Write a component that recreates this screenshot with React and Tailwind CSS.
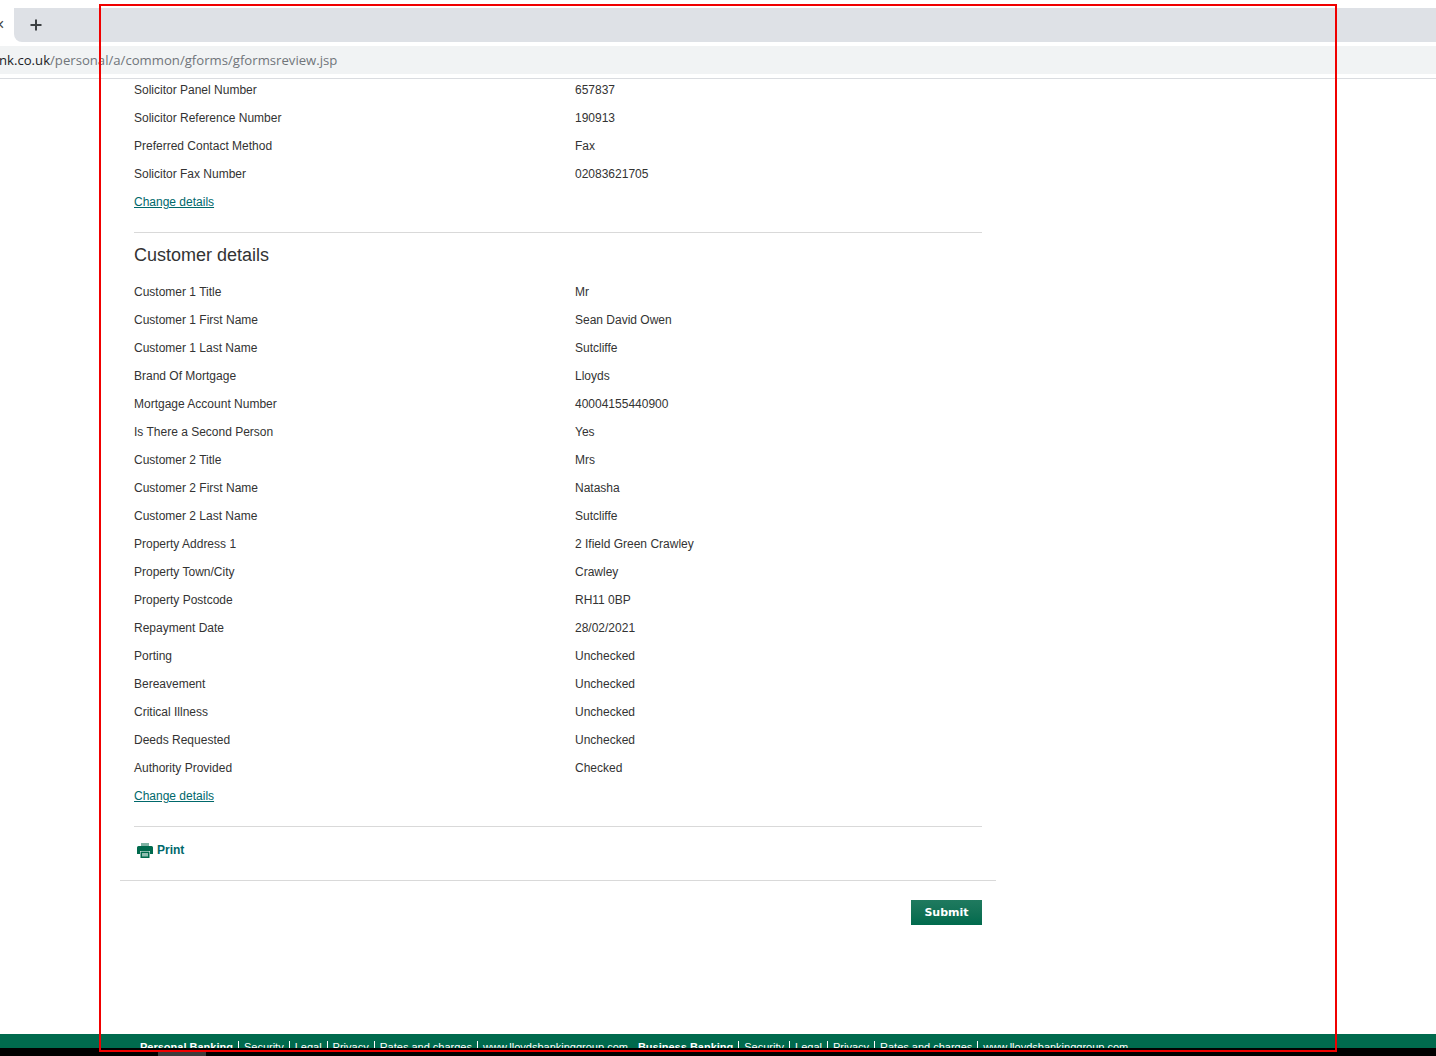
const solicitorRows = [
  ['Solicitor Panel Number', '657837'],
  ['Solicitor Reference Number', '190913'],
  ['Preferred Contact Method', 'Fax'],
  ['Solicitor Fax Number', '02083621705'],
];

const customerRows = [
  ['Customer 1 Title', 'Mr'],
  ['Customer 1 First Name', 'Sean David Owen'],
  ['Customer 1 Last Name', 'Sutcliffe'],
  ['Brand Of Mortgage', 'Lloyds'],
  ['Mortgage Account Number', '40004155440900'],
  ['Is There a Second Person', 'Yes'],
  ['Customer 2 Title', 'Mrs'],
  ['Customer 2 First Name', 'Natasha'],
  ['Customer 2 Last Name', 'Sutcliffe'],
  ['Property Address 1', '2 Ifield Green Crawley'],
  ['Property Town/City', 'Crawley'],
  ['Property Postcode', 'RH11 0BP'],
  ['Repayment Date', '28/02/2021'],
  ['Porting', 'Unchecked'],
  ['Bereavement', 'Unchecked'],
  ['Critical Illness', 'Unchecked'],
  ['Deeds Requested', 'Unchecked'],
  ['Authority Provided', 'Checked'],
];

const footerLinks = ['Security', 'Legal', 'Privacy', 'Rates and charges', 'www.lloydsbankinggroup.com'];

function Row({ label, value }) {
  return (
    <div className="flex h-7 items-center">
      <div className="w-[441px]">{label}</div>
      <div>{value}</div>
    </div>
  );
}

function ChangeLink() {
  return (
    <div className="flex h-7 items-center">
      <a href="#" className="text-[#00686b] underline">Change details</a>
    </div>
  );
}

function FooterGroup({ title }) {
  return (
    <>
      <span className="font-bold">{title}</span>
      {footerLinks.map((link) => (
        <span key={link} className="ml-[5px] border-l border-white pl-[5px]">{link}</span>
      ))}
    </>
  );
}

export default function App() {
  return (
    <div className="relative flex h-[1056px] flex-col overflow-hidden bg-white font-['Liberation_Sans',Arial,sans-serif] text-[12px] text-[#333]">
      {/* browser chrome */}
      <div className="mt-2 flex h-[34px] bg-white">
        <div className="flex w-[14px] items-center text-[16px] text-[#444]">
          <span className="-ml-[5px]">×</span>
        </div>
        <div className="flex flex-1 items-center rounded-bl-lg bg-[#dee1e6] pl-[14px]">
          <svg width="16" height="16" viewBox="0 0 16 16" fill="none" stroke="#3c4043" strokeWidth="2">
            <path d="M8 2.500v11M2.500 8h11" />
          </svg>
        </div>
      </div>
      <div className="mt-1 flex h-7 items-center bg-[#f1f3f4] pt-[2px] font-['Open_Sans',sans-serif] text-[13.15px] text-[#70757a]">
        <span className="-ml-[1px] text-[#202124]">nk.co.uk</span>
        <span>/personal/a/common/gforms/gformsreview.jsp</span>
      </div>
      <div className="mt-1 h-px bg-[#dadce0]"></div>

      {/* form review */}
      <div className="flex flex-1 flex-col pl-[120px]">
        <div className="w-[876px]">
          <div className="px-[14px]">
            <div className="-mt-[3px]">
              {solicitorRows.map(([label, value]) => (
                <Row key={label} label={label} value={value} />
              ))}
            </div>
            <ChangeLink />
            <div className="mt-4 h-px bg-[#d9d9d9]"></div>
            <h2 className="mt-[10px] mb-[11px] text-[18px] leading-[24px] text-[#333]">Customer details</h2>
            {customerRows.map(([label, value]) => (
              <Row key={label} label={label} value={value} />
            ))}
            <ChangeLink />
            <div className="mt-4 h-px bg-[#d9d9d9]"></div>
            <div className="flex h-[53px] items-center pb-2 pl-[3px]">
              <svg width="16" height="15" viewBox="0 0 16 15" className="mt-[2px] mr-1">
                <path d="M4 0h8v3H4z" fill="#7fb3a4" />
                <path d="M1.500 3h13A1.500 1.500 0 0 1 16 4.500V11h-3V8H3v3H0V4.500A1.500 1.500 0 0 1 1.500 3z" fill="#006a4d" />
                <path d="M3.500 8.500h9V15h-9z" fill="#006a4d" />
                <path d="M5 10h6v3.500H5z" fill="#8fbdb0" />
              </svg>
              <span className="font-bold text-[#00686b]">Print</span>
            </div>
          </div>
          <div className="h-px bg-[#d9d9d9]"></div>
          <div className="mt-[19px] flex justify-end pr-[14px]">
            <button className="h-[25px] w-[71px] bg-gradient-to-b from-[#1f7a5f] to-[#006a4d] pt-[2px] font-['DejaVu_Sans',sans-serif] text-[11px] font-bold text-white">
              Submit
            </button>
          </div>
        </div>
      </div>

      {/* footer, cut off by the window */}
      <div className="h-[14px] overflow-hidden whitespace-nowrap bg-[#006a4d] pl-[140px] pt-[7px] text-[11px] leading-[13px] text-white">
        <FooterGroup title="Personal Banking" />
        <span className="ml-[10px]"></span>
        <FooterGroup title="Business Banking" />
      </div>
      <div className="h-2 bg-black pl-[158px]">
        <div className="mt-1 h-1 w-12 bg-[#3c3c3c]"></div>
      </div>

      {/* red marker box over the picture */}
      <div className="pointer-events-none absolute left-[99px] top-1 h-[1048px] w-[1238px] border-2 border-[#f00000]"></div>
    </div>
  );
}
